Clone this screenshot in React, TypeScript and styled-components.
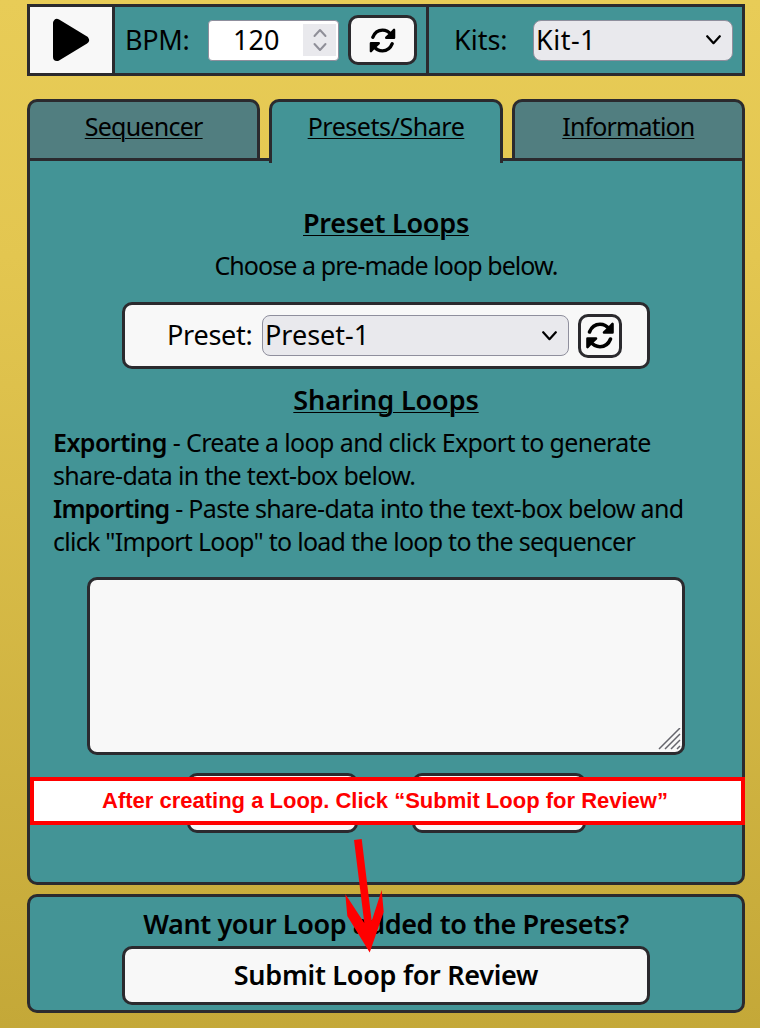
import React from "react";
import styled, { createGlobalStyle, css } from "styled-components";

const ink = "#2b2a2e";
const teal = "#439496";
const paper = "#f8f8f8";

const GlobalStyle = createGlobalStyle`
  * { box-sizing: border-box; }
  html { min-height: 100%; }
  body {
    margin: 0;
    min-height: 1028px;
    background: linear-gradient(#e8cc57, #e3c650 25%, #c4a838);
    font-family: "Noto Sans", "Open Sans", sans-serif;
    font-stretch: 87.5%;
    color: #000;
  }
  button { font-family: inherit; color: inherit; padding: 0; }
`;

const Page = styled.main`
  position: relative;
  width: 760px;
  height: 1028px;
  padding: 4px 15px 0 27px;
  overflow: hidden;
`;

const Text = styled.span<{ $size: number; $ls?: number; $bold?: boolean; $line?: boolean }>`
  display: inline-block;
  white-space: pre;
  font-size: ${(p) => p.$size}px;
  letter-spacing: ${(p) => p.$ls ?? 0}px;
  font-weight: ${(p) => (p.$bold ? 600 : 400)};
  line-height: 31px;
  margin-bottom: 2px;
  ${(p) =>
    p.$line &&
    css`
      text-decoration: underline;
      text-decoration-thickness: 1px;
      text-underline-offset: 2px;
    `}
`;

const Toolbar = styled.header`
  display: flex;
  height: 72px;
  border: 3px solid ${ink};
  background: ${teal};
`;

const PlayButton = styled.button`
  width: 85px;
  border: 0;
  border-right: 3px solid ${ink};
  background: ${paper};
  display: flex;
  align-items: center;
  justify-content: center;
`;

const TempoGroup = styled.div`
  width: 314px;
  display: flex;
  align-items: center;
  padding-left: 10px;
  border-right: 3px solid ${ink};
`;

const KitGroup = styled.div`
  flex: 1;
  display: flex;
  align-items: center;
  padding-left: 25px;
`;

const Label = styled.div<{ $w: number }>`
  width: ${(p) => p.$w}px;
  flex: none;
  display: flex;
`;

const NumberField = styled.div`
  width: 131px;
  height: 41px;
  padding: 4px 2px 4px 24px;
  display: flex;
  align-items: center;
  justify-content: space-between;
  border: 1px solid #8f8f9d;
  border-radius: 4px;
  background: #fff;
`;

const Stepper = styled.div`
  width: 33px;
  height: 32px;
  display: flex;
  align-items: center;
  justify-content: center;
  background: #e9e9ed;
`;

const IconButton = styled.button<{ $w: number; $h: number }>`
  width: ${(p) => p.$w}px;
  height: ${(p) => p.$h}px;
  margin-left: 9px;
  display: flex;
  align-items: center;
  justify-content: center;
  border: 3px solid ${ink};
  border-radius: 10px;
  background: ${paper};
`;

const SelectBox = styled.div<{ $w: number }>`
  width: ${(p) => p.$w}px;
  height: 41px;
  padding: 0 11px 0 2px;
  display: flex;
  align-items: center;
  justify-content: space-between;
  border: 1px solid #8f8f9d;
  border-radius: 8px;
  background: #e9e9ed;
`;

const Tabs = styled.nav`
  display: flex;
  gap: 9px;
  height: 62px;
  margin-top: 23px;
`;

const Tab = styled.a<{ $active?: boolean }>`
  flex: 1;
  height: ${(p) => (p.$active ? 64 : 59)}px;
  padding-top: 9px;
  text-align: center;
  border: 3px solid ${ink};
  border-bottom: 0;
  border-radius: 10px 10px 0 0;
  background: ${(p) => (p.$active ? teal : "#517e80")};
  z-index: 1;
`;

const Panel = styled.section`
  height: 727px;
  margin-top: -3px;
  padding-top: 46px;
  display: flex;
  flex-direction: column;
  align-items: center;
  border: 3px solid ${ink};
  border-radius: 0 0 10px 10px;
  background: ${teal};
`;

const PresetBox = styled.div`
  width: 528px;
  height: 67px;
  margin: 19px 0 15px;
  padding-left: 42px;
  display: flex;
  align-items: center;
  border: 3px solid ${ink};
  border-radius: 10px;
  background: ${paper};
`;

const Heading = styled.h2`
  margin: 0;
  height: 33px;
  display: flex;
`;

const Lead = styled.p`
  margin: 10px 0 0;
  height: 33px;
  display: flex;
`;

const Instructions = styled.div`
  align-self: flex-start;
  margin: 10px 0 0 23px;
  display: flex;
  flex-direction: column;
`;

const Line = styled.div`
  display: flex;
  height: 33px;
`;

const ShareData = styled.div`
  width: 598px;
  height: 178px;
  margin-top: 18px;
  display: flex;
  align-items: flex-end;
  justify-content: flex-end;
  border: 3px solid ${ink};
  border-radius: 10px;
  background: ${paper};
`;

const Actions = styled.div`
  display: flex;
  gap: 54px;
  margin-top: 18px;
`;

const ActionButton = styled.button<{ $w: number; $h: number }>`
  width: ${(p) => p.$w}px;
  height: ${(p) => p.$h}px;
  border: 3px solid ${ink};
  border-radius: 10px;
  background: ${paper};
`;

const SubmitPanel = styled.section`
  height: 119px;
  margin-top: 9px;
  padding-top: 11px;
  display: flex;
  flex-direction: column;
  align-items: center;
  gap: 5px;
  border: 3px solid ${ink};
  border-radius: 10px;
  background: ${teal};
`;

const Callout = styled.aside`
  position: absolute;
  left: 30px;
  top: 777px;
  width: 715px;
  height: 48px;
  padding-right: 5px;
  display: flex;
  align-items: center;
  justify-content: center;
  border: 4px solid #f00;
  background: #fff;
  color: #f00;
  font: bold 22px/40px "Liberation Sans", Arial, sans-serif;
  white-space: nowrap;
  z-index: 2;
`;

const Arrow = styled.svg`
  position: absolute;
  left: 345px;
  top: 839px;
  z-index: 2;
`;

const Refresh = ({ w, h }: { w: number; h: number }) => (
  <svg width={w} height={h} viewBox="0 0 28 27" fill="none" stroke="#000" strokeWidth="3.6" strokeLinecap="round">
    <path d="M3.500 10C5.500 5 9 2.300 14 2.300c4 0 7 1.700 9.500 5" />
    <path d="M24.500 17C22.500 22 19 24.700 14 24.700c-4 0-7-1.700-9.500-5" />
    <path d="M26.500 2v8.500h-8.500l3.500-3.200z" fill="#000" strokeWidth="2.600" strokeLinejoin="round" />
    <path d="M1.500 25v-8.500h8.500l-3.500 3.200z" fill="#000" strokeWidth="2.600" strokeLinejoin="round" />
  </svg>
);

const Chevron = () => (
  <svg width="15" height="10" viewBox="0 0 15 10" fill="none" stroke="#000" strokeWidth="2.200" strokeLinecap="round" strokeLinejoin="round">
    <path d="M1.200 1.200l6.300 7 6.300-7" />
  </svg>
);

export default function App() {
  return (
    <>
      <GlobalStyle />
      <Page>
        <Toolbar>
          <PlayButton aria-label="Play">
            <svg width="38" height="44" viewBox="0 0 38 44">
              <path d="M5 5v34L33 22z" stroke="#000" strokeWidth="8" strokeLinejoin="round" />
            </svg>
          </PlayButton>
          <TempoGroup>
            <Label $w={83}><Text $size={27} $ls={-0.3}>BPM:</Text></Label>
            <NumberField>
              <Text $size={27}>120</Text>
              <Stepper>
                <svg width="14" height="24" viewBox="0 0 14 24" fill="none" stroke="#8f8f98" strokeWidth="2" strokeLinecap="round" strokeLinejoin="round">
                  <path d="M1.500 8L7 2l5.500 6M1.500 16L7 22l5.500-6" />
                </svg>
              </Stepper>
            </NumberField>
            <IconButton $w={69} $h={50} aria-label="Reset tempo"><Refresh w={27} h={25} /></IconButton>
          </TempoGroup>
          <KitGroup>
            <Label $w={79}><Text $size={27}>Kits:</Text></Label>
            <SelectBox $w={200}><Text $size={27} $ls={0.5}>Kit-1</Text><Chevron /></SelectBox>
          </KitGroup>
        </Toolbar>

        <Tabs>
          <Tab><Text $size={25} $ls={-0.75} $line>Sequencer</Text></Tab>
          <Tab $active><Text $size={25} $ls={-0.45} $line>Presets/Share</Text></Tab>
          <Tab><Text $size={25} $ls={-0.85} $line>Information</Text></Tab>
        </Tabs>

        <Panel>
          <Heading><Text $size={27} $ls={-0.25} $bold $line>Preset Loops</Text></Heading>
          <Lead><Text $size={25} $ls={-0.92}>Choose a pre-made loop below.</Text></Lead>
          <PresetBox>
            <Label $w={95}><Text $size={27} $ls={-0.25}>Preset:</Text></Label>
            <SelectBox $w={307}><Text $size={27}>Preset-1</Text><Chevron /></SelectBox>
            <IconButton $w={44} $h={44} aria-label="Reload preset"><Refresh w={28} h={27} /></IconButton>
          </PresetBox>
          <Heading><Text $size={27} $ls={-0.1} $bold $line>Sharing Loops</Text></Heading>
          <Instructions>
            <Line><Text $size={25} $ls={-0.55} $bold>Exporting</Text><Text $size={25} $ls={-0.62}> - Create a loop and click Export to generate</Text></Line>
            <Line><Text $size={25} $ls={-0.67}>share-data in the text-box below.</Text></Line>
            <Line><Text $size={25} $ls={-0.85} $bold>Importing</Text><Text $size={25} $ls={-0.68}> - Paste share-data into the text-box below and</Text></Line>
            <Line><Text $size={25} $ls={-0.73}>click "Import Loop" to load the loop to the sequencer</Text></Line>
          </Instructions>
          <ShareData>
            <svg width="24" height="24" viewBox="0 0 24 24" stroke="#65656c" strokeWidth="1.500">
              <path d="M1 21L22 0M7 21L22 6M13 21l9-9M19 21l3-3" />
            </svg>
          </ShareData>
          <Actions>
            <ActionButton $w={171} $h={60} aria-label="Export" />
            <ActionButton $w={174} $h={60} aria-label="Import Loop" />
          </Actions>
        </Panel>

        <SubmitPanel>
          <Heading><Text $size={27} $ls={-0.4} $bold>Want your Loop added to the Presets?</Text></Heading>
          <ActionButton $w={528} $h={59}><Text $size={27} $ls={-0.28} $bold>Submit Loop for Review</Text></ActionButton>
        </SubmitPanel>

        <Callout>After creating a Loop. Click “Submit Loop for Review”</Callout>
        <Arrow width="40" height="114" viewBox="0 0 40 114" fill="#f00">
          <path d="M9 1L16.700 0 26.700 82 36.700 51 38.700 73 24.700 113.500 2.300 77 .3 55 19.300 84z" />
        </Arrow>
      </Page>
    </>
  );
}
